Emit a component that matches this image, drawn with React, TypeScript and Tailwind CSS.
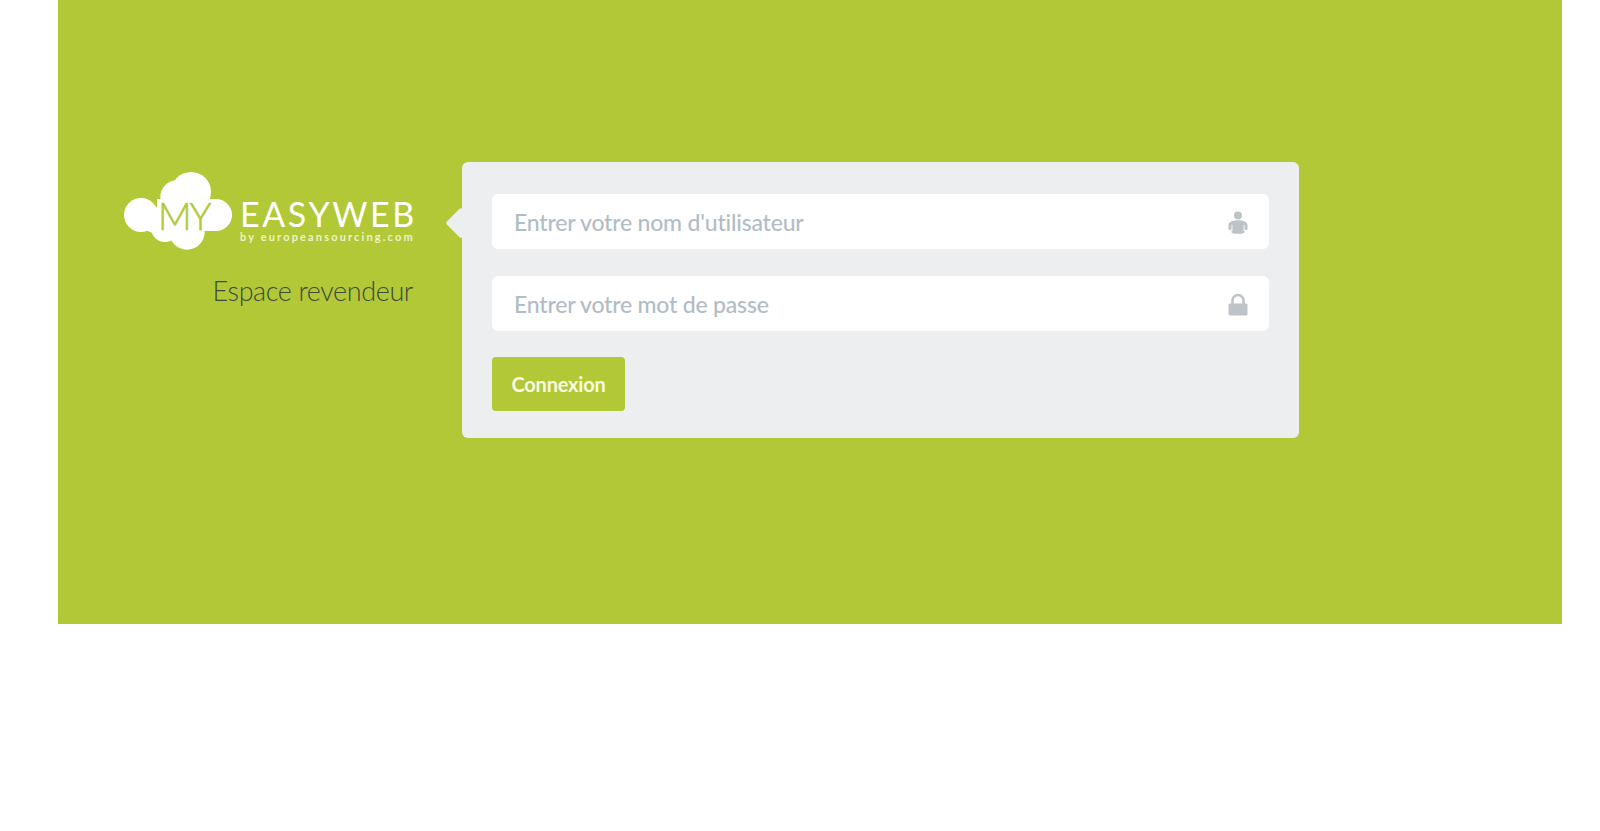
export default function App() {
  return (
    <div className="h-[831px] bg-white pl-[58px] font-['Lato','Noto_Sans',sans-serif]">
      <div className="flex h-[623.5px] w-[1503.5px] items-start gap-[49px] bg-[#b2c837] pt-[162px] pl-[66px]">
        {/* Logo + subtitle */}
        <div className="flex w-[289px] shrink-0 flex-col items-end pt-[9.7px]">
          <Logo />
          <p className="mt-[23px] text-[27px] leading-[36px] font-light tracking-[-0.4px] text-[#3e4a3c]">
            Espace revendeur
          </p>
        </div>

        {/* Login panel */}
        <div className="relative flex h-[276px] w-[837px] flex-col items-start gap-[26.5px] rounded-md bg-[#eceef0] px-[30px] pt-[32px]">
          <div className="absolute top-[50px] left-[-12px] h-[22px] w-[22px] rotate-45 rounded-[2px] bg-[#eceef0]" />
          <Field placeholder="Entrer votre nom d'utilisateur" icon={<UserIcon />} />
          <Field placeholder="Entrer votre mot de passe" icon={<LockIcon />} />
          <button className="h-[54px] w-[133px] rounded-[4px] bg-[#b2c837] text-[20px] font-bold tracking-[-0.2px] text-[#f8fae0]">
            Connexion
          </button>
        </div>
      </div>
    </div>
  );
}

function Field({ placeholder, icon }: { placeholder: string; icon: React.ReactNode }) {
  return (
    <div className="relative h-[55px] w-full rounded-md bg-white">
      <input
        placeholder={placeholder}
        className="h-full w-full rounded-md bg-transparent pt-[1px] pr-12 pl-[22px] text-[23px] font-medium tracking-[-0.2px] outline-none placeholder:text-[#b2bcc5]"
      />
      <div className="absolute top-[17px] right-[21px]">{icon}</div>
    </div>
  );
}

function UserIcon() {
  return (
    <svg width="20" height="23" viewBox="0 0 20 23" className="block" fill="#bdc3c7">
      <circle cx="10" cy="4.5" r="4" />
      <path d="M4.5 10 C6 9 14 9 15.5 10 C18 10.8 19.5 12 19.5 14 V18 C19.5 19 18.5 19.5 17.5 19 L16.5 17 L16.5 21 C16.5 22 15 22.8 10 22.8 C5 22.8 3.5 22 3.5 21 L3.5 17 L2.5 19 C1.5 19.5 .5 19 .5 18 V14 C.5 12 2 10.8 4.5 10 Z" />
      <path d="M4 14 V20 M16 14 V20" stroke="#fff" strokeWidth="0.8" fill="none" />
    </svg>
  );
}

function LockIcon() {
  return (
    <svg width="20" height="23" viewBox="0 0 20 23" className="block">
      <path d="M4.5 12 V7.5 A5.5 5.5 0 0 1 15.5 7.5 V12" fill="none" stroke="#bdc3c7" strokeWidth="2.6" />
      <rect x="0.5" y="10.5" width="19" height="12" rx="1.5" fill="#bdc3c7" />
    </svg>
  );
}

function Logo() {
  return (
    <div className="flex w-[290px] shrink-0 gap-[8px]">
      <div className="relative h-[78px] w-[109px] shrink-0">
        <svg width="109" height="78" viewBox="0 0 109 78" fill="#fff" className="block">
          <circle cx="18" cy="43" r="17" />
          <circle cx="54" cy="25" r="16.7" />
          <circle cx="68" cy="20" r="20" />
          <circle cx="93" cy="43" r="16" />
          <circle cx="64" cy="60" r="17.7" />
          <circle cx="42" cy="56" r="14" />
          <circle cx="32" cy="48" r="13" />
          <rect x="34" y="27" width="59" height="32" />
        </svg>
        <span className="absolute top-[22px] left-[35px] text-[37px] leading-[44px] font-light tracking-[-2px] text-[#b2c837] [-webkit-text-stroke:0.5px_#b2c837]">MY</span>
      </div>
      <div className="pt-[27.8px]">
        <div className="text-[34px] leading-[30px] tracking-[2.6px] whitespace-nowrap text-white">EASYWEB</div>
        <div className="mt-[0.5px] text-[11px] leading-[14px] font-bold tracking-[2.15px] whitespace-nowrap text-[#eef3c8]">
          by europeansourcing.com
        </div>
      </div>
    </div>
  );
}
